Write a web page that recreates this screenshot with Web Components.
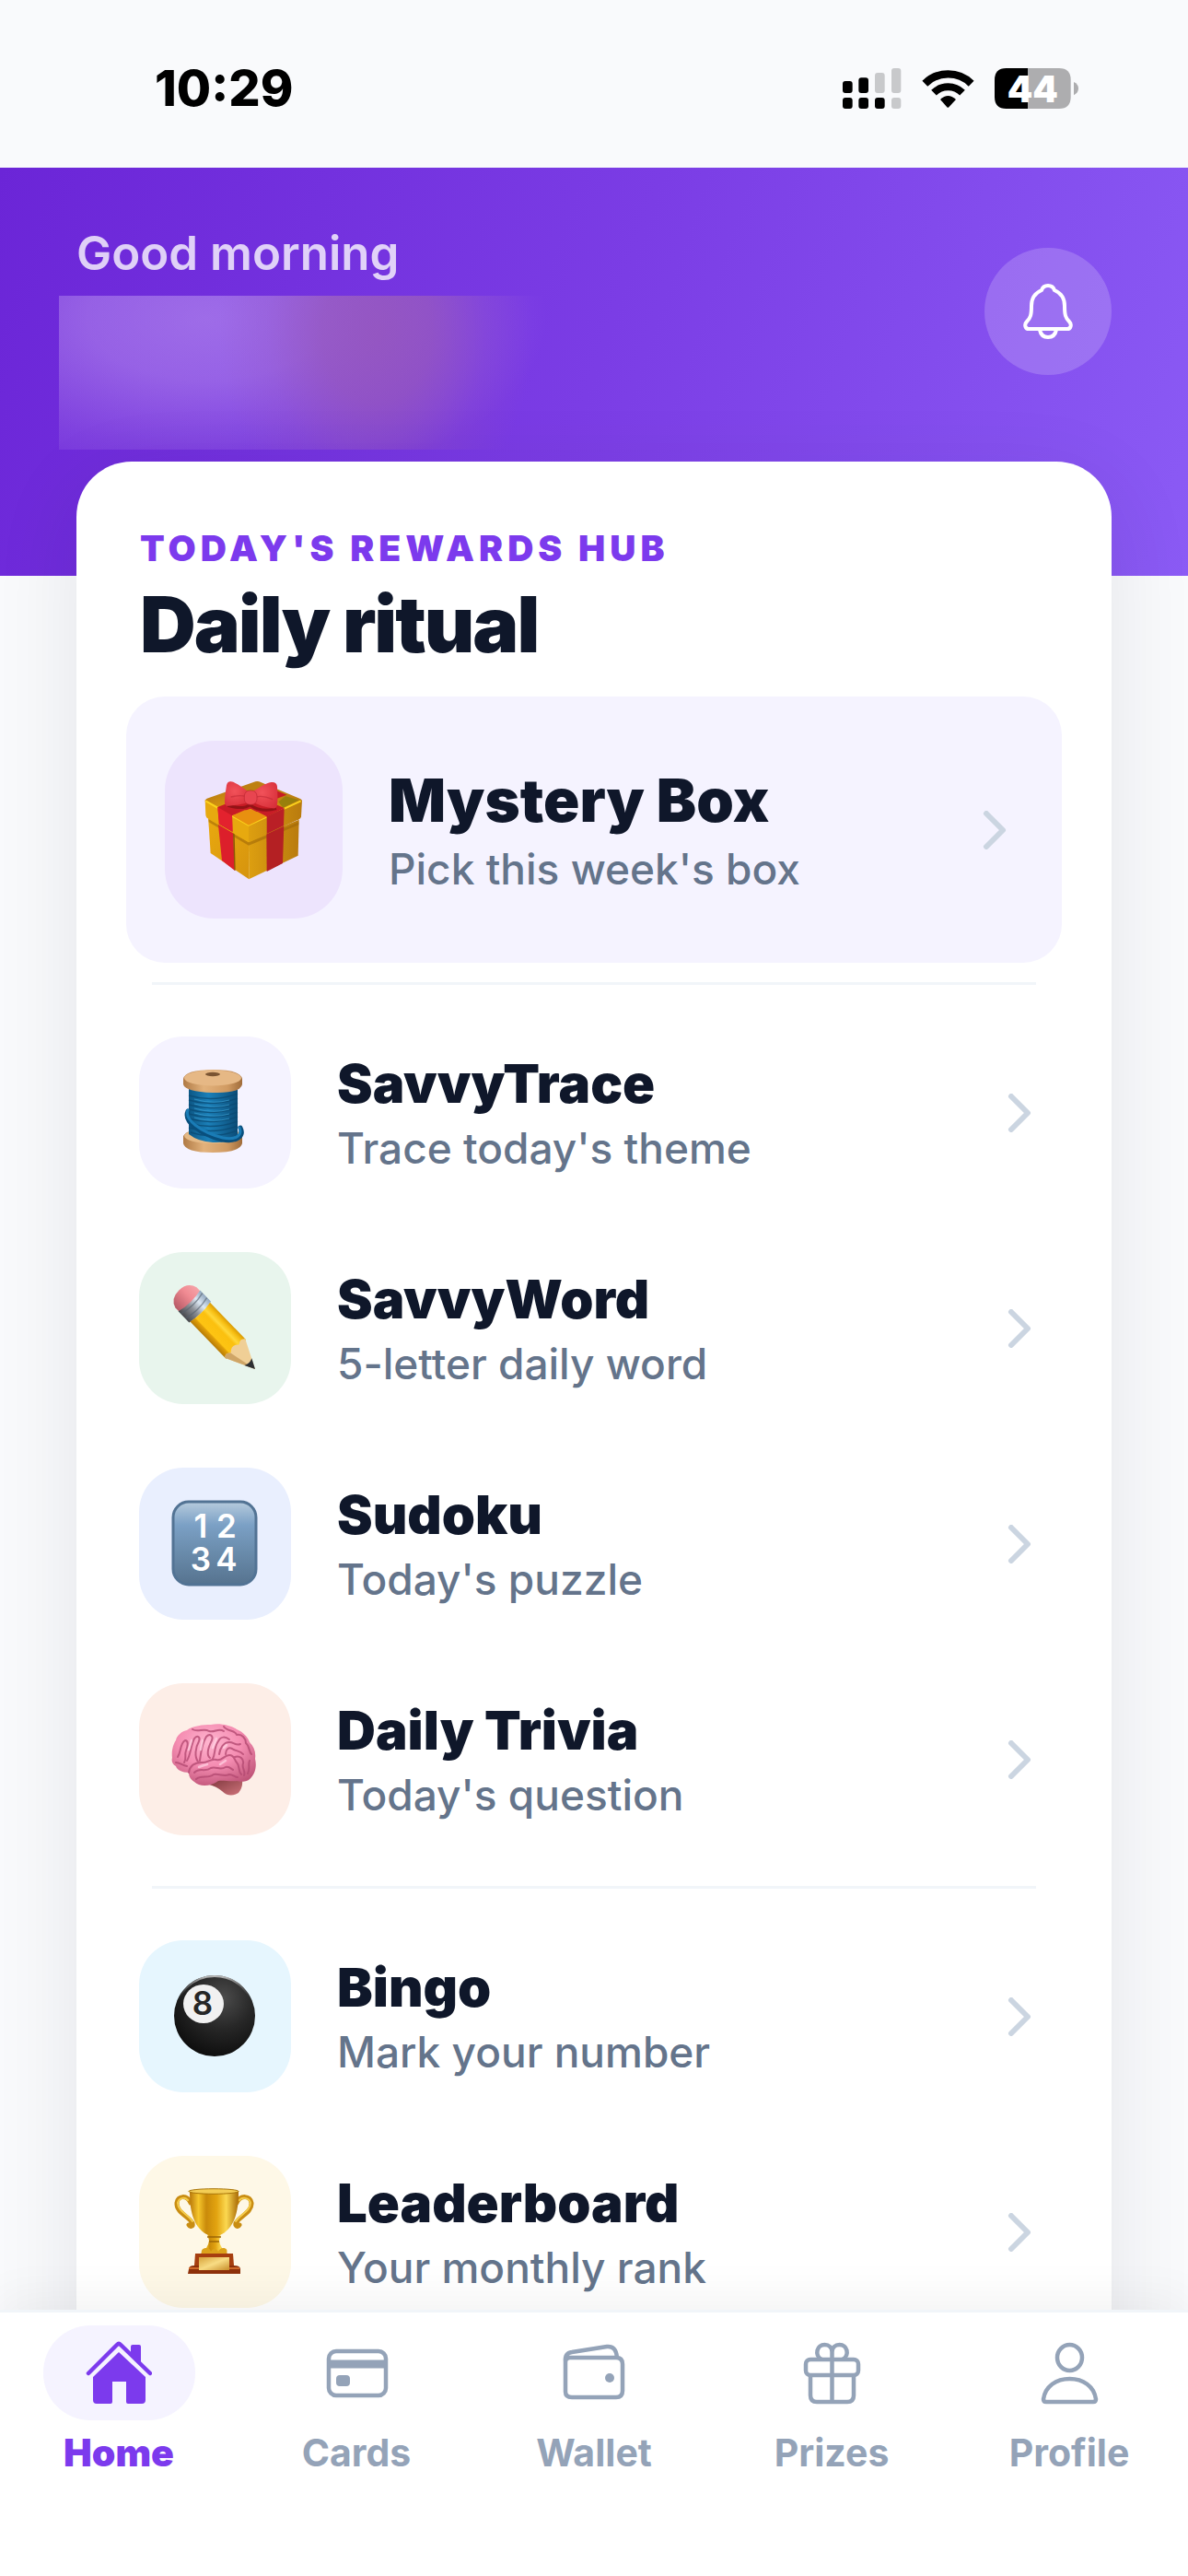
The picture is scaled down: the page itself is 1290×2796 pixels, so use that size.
<!DOCTYPE html>
<html lang="en">
<head>
<meta charset="utf-8">
<meta name="viewport" content="width=device-width, initial-scale=1">
<title>Daily ritual</title>
<style>
  html, body { margin: 0; height: 100%; }
  body {
    --violet: #7c3aed;
    --ink: #0f172a;
    --slate: #64748b;
    --mist: #94a3b8;
    --line: #f1f5f9;
    --lilac: #f5f3ff;
    background: #f9fafc;
    color: var(--ink);
    font-family: Inter, "Liberation Sans", sans-serif;
  }
</style>
</head>
<body>
<app-shell>
  <status-bar slot="status">10:29</status-bar>
  <hero-header>Good morning</hero-header>
  <rewards-card>
    <span slot="eyebrow">TODAY'S REWARDS HUB</span>
    <span slot="title">Daily ritual</span>

    <reward-row featured tone="#ede4fd">
      <svg slot="icon" width="108" height="108" viewBox="214 200 324 324" aria-hidden="true">
        <defs>
          <linearGradient id="gl" x1="0" y1="0" x2="1" y2="1"><stop offset="0" stop-color="#e9a90f"/><stop offset="1" stop-color="#d6940e"/></linearGradient>
          <linearGradient id="gr" x1="0" y1="0" x2="1" y2="0"><stop offset="0" stop-color="#dd9f10"/><stop offset="1" stop-color="#b97b0e"/></linearGradient>
          <radialGradient id="gt" cx=".42" cy=".8" r=".6"><stop offset="0" stop-color="#f58a16"/><stop offset=".5" stop-color="#d9960f"/><stop offset="1" stop-color="#bd8012"/></radialGradient>
          <radialGradient id="bow" cx=".4" cy=".4" r=".7"><stop offset="0" stop-color="#f2525a"/><stop offset="1" stop-color="#d8303a"/></radialGradient>
        </defs>
        <path d="M226 318 358 396 359 522 234 437Z" fill="url(#gl)"/>
        <path d="M358 396 522 328 519 445 359 522Z" fill="url(#gr)"/>
        <path d="M227 326 358 402 521 336 521 345 358 412 228 336Z" fill="#9a6508" opacity=".55"/>
        <path d="M258 335 307 365 313 494 271 461Z" fill="#dc1f2b"/>
        <path d="M307 366 312 372 315 494 311 492Z" fill="#8c5606"/>
        <path d="M416 370 473 345 469 470 417 497Z" fill="#b42023"/>
        <path d="M222 259 380 204Q386 202 392 204L526 260Q532 263 530 268L360 345 216 268Q216 262 222 259Z" fill="url(#gt)"/>
        <path d="M216 264 358 345 358 402 222 322Q218 318 218 312Z" fill="#e7a90f"/>
        <path d="M358 345 532 264 529 318Q528 324 522 327L358 402Z" fill="url(#gr)"/>
        <path d="M218 267 358 346 528 267" fill="none" stroke="#fbd21c" stroke-width="6" stroke-linejoin="round"/>
        <path d="M257 287 420 222 482 247 304 315 305 367 263 343Z" fill="#c71b25"/>
        <path d="M257 287 304 315 306 368 261 342Z" fill="#e3222e"/>
        <path d="M474 290 417 319 320 270 378 250Z" fill="#c81d26"/>
        <path d="M417 318 474 290 472 348 417 374Z" fill="#ba1f26"/>
        <path d="M304 315 345 297 388 303 417 318 358 346Z" fill="#e8900f"/>
        <path d="M455 270 478 252 522 264 470 289Z" fill="#8d7d0b" opacity=".8"/>
        <path d="M290 282Q340 296 362 280 400 306 448 292" fill="none" stroke="#7d1010" stroke-width="9" opacity=".7"/>
        <path d="M360 238C340 226 318 206 300 204Q289 203 286 216C283 238 279 258 280 274Q282 285 294 283C318 280 345 278 362 268Z" fill="url(#bow)"/>
        <path d="M368 238C390 226 412 208 432 206Q450 205 451 220C452 246 454 266 450 283Q447 293 436 291C414 288 388 280 368 268Z" fill="url(#bow)"/>
        <path d="M300 254Q335 246 350 254M436 262Q400 248 384 254" stroke="#bf2a35" stroke-width="4" fill="none" opacity=".6"/>
        <rect x="344" y="233" width="41" height="46" rx="18" fill="#e84550" stroke="#bd2732" stroke-width="2"/>
      </svg>
      <span slot="title">Mystery Box</span>
      <span slot="subtitle">Pick this week's box</span>
    </reward-row>

    <card-divider></card-divider>

    <reward-row tone="#f5f3ff">
      <svg slot="icon" width="165" height="165" viewBox="0 0 165 165" aria-hidden="true">
        <defs>
          <linearGradient id="wd" x1="0" x2="1"><stop offset="0" stop-color="#b07a45"/><stop offset=".35" stop-color="#e2b27c"/><stop offset=".75" stop-color="#d09a62"/><stop offset="1" stop-color="#a06c3a"/></linearGradient>
          <linearGradient id="th" x1="0" x2="1"><stop offset="0" stop-color="#0d5785"/><stop offset=".4" stop-color="#1b80b9"/><stop offset="1" stop-color="#0b4c77"/></linearGradient>
        </defs>
        <path d="M48 108Q52 100 80 100T112 108V116Q110 126 80 126T48 116Z" fill="url(#wd)"/>
        <ellipse cx="80" cy="108" rx="31" ry="8" fill="#e5b985"/>
        <path d="M54 55H107V108Q96 116 80 115T54 106Z" fill="url(#th)"/>
        <g fill="none" stroke="#0a4a73" stroke-width="1.4" opacity=".8">
          <path d="M54 64Q80 72 107 62M54 69Q80 77 107 67M54 74Q80 82 107 72M54 79Q80 87 107 77M54 84Q80 92 107 82M54 89Q80 97 107 87M54 94Q80 102 107 92M54 99Q80 107 107 97M56 104Q80 112 107 102"/>
        </g>
        <g fill="none" stroke="#3c9fd2" stroke-width="1.1" opacity=".65">
          <path d="M60 68Q80 74 98 69M60 73Q80 79 98 74M60 78Q80 84 98 79M60 83Q80 89 98 84M60 88Q80 94 98 89"/>
        </g>
        <path d="M53 81C48 92 66 106 90 112 108 115 114 107 110 99" fill="none" stroke="#094f7d" stroke-width="5" stroke-linecap="round"/>
        <path d="M53 80C49 90 67 104 91 110 107 113 112 106 109 99" fill="none" stroke="#1a7cb6" stroke-width="3" stroke-linecap="round"/>
        <path d="M48 46Q50 36 80 36T112 46V52Q110 62 80 61T48 52Z" fill="url(#wd)"/>
        <ellipse cx="80" cy="45" rx="31" ry="8.500" fill="#e6b885"/>
        <ellipse cx="80" cy="41" rx="8" ry="2.200" fill="#7a5432"/>
      </svg>
      <span slot="title">SavvyTrace</span>
      <span slot="subtitle">Trace today's theme</span>
    </reward-row>

    <reward-row tone="#e8f5ed">
      <svg slot="icon" width="165" height="165" viewBox="0 0 165 165" aria-hidden="true">
        <defs>
          <linearGradient id="er" x1="0" y1="0" x2="0" y2="1"><stop offset="0" stop-color="#f5a3a8"/><stop offset=".4" stop-color="#f08a92"/><stop offset="1" stop-color="#b65a66"/></linearGradient>
          <linearGradient id="fe" x1="0" y1="0" x2="0" y2="1"><stop offset="0" stop-color="#8fa5bd"/><stop offset=".3" stop-color="#dce8f3"/><stop offset=".6" stop-color="#8b8f96"/><stop offset="1" stop-color="#45474b"/></linearGradient>
          <linearGradient id="bd" x1="0" y1="0" x2="0" y2="1"><stop offset="0" stop-color="#d99b06"/><stop offset=".14" stop-color="#f6bd12"/><stop offset=".3" stop-color="#ffd83a"/><stop offset=".42" stop-color="#fbc00f"/><stop offset=".75" stop-color="#fdc413"/><stop offset=".8" stop-color="#e09f08"/><stop offset="1" stop-color="#b67b06"/></linearGradient>
        </defs>
        <g transform="translate(126 127) rotate(46)">
          <path d="M-98-16H-108Q-119-13-119 0T-108 16H-98Z" fill="url(#er)"/>
          <path d="M-103-16.500H-86Q-83 0-86 16.500H-103Q-99 0-103-16.500Z" fill="url(#fe)"/>
          <path d="M-99-16Q-95 0-99 16M-92-16Q-88 0-92 16" fill="none" stroke="#55606d" stroke-width="1.500" opacity=".6"/>
          <path d="M-86-15H-30L-26 0-30 15H-86Q-83 0-86-15Z" fill="url(#bd)"/>
          <path d="M-31-15 0 0-31 15Q-36 12-31 7-38 0-31-6-36-11-31-15Z" fill="#f0cf96"/>
          <path d="M-31 15 0 0-31 7Q-36 12-31 15Z" fill="#cfa566"/>
          <path d="M-11-5.500 0 0-11 5.500Q-8 0-11-5.500Z" fill="#2d2f33"/>
        </g>
      </svg>
      <span slot="title">SavvyWord</span>
      <span slot="subtitle">5-letter daily word</span>
    </reward-row>

    <reward-row tone="#e9effe">
      <svg slot="icon" width="165" height="165" viewBox="0 0 165 165" aria-hidden="true">
        <defs>
          <linearGradient id="sq" x1="0" y1="0" x2="0" y2="1"><stop offset="0" stop-color="#b6cbdd"/><stop offset=".28" stop-color="#7ba0c5"/><stop offset=".6" stop-color="#6a8cac"/><stop offset="1" stop-color="#56738f"/></linearGradient>
        </defs>
        <rect x="37" y="37" width="90" height="90" rx="17" fill="url(#sq)" stroke="#527394" stroke-width="3"/>
        <g fill="#fff" font-family="Inter, sans-serif" font-size="35" font-weight="600" text-anchor="middle">
          <text x="67" y="76">1</text><text x="95" y="76">2</text>
          <text x="67" y="112">3</text><text x="95" y="112">4</text>
        </g>
      </svg>
      <span slot="title">Sudoku</span>
      <span slot="subtitle">Today's puzzle</span>
    </reward-row>

    <reward-row tone="#fdeee7">
      <svg slot="icon" width="165" height="165" viewBox="0 0 165 165" aria-hidden="true">
        <defs>
          <radialGradient id="br" cx=".45" cy=".3" r=".75"><stop offset="0" stop-color="#ffb6d0"/><stop offset=".5" stop-color="#f58db2"/><stop offset="1" stop-color="#bf5478"/></radialGradient>
          <linearGradient id="stem" x1="0" y1="0" x2="1" y2="1"><stop offset="0" stop-color="#7c363c"/><stop offset="1" stop-color="#d0747c"/></linearGradient>
        </defs>
        <path d="M76 108Q92 102 112 105 113 113 108 119 98 125 90 117 84 112 76 110Z" fill="url(#stem)"/>
        <path d="M36 81C35 74 37 66 40 62 41 56 47 52 52 51 58 46 70 45 78 45 88 43 100 46 106 50 113 53 118 58 120 64 125 69 127 75 126 82 128 90 126 98 122 102 118 108 110 107 106 106 98 107 92 105 86 106 78 112 66 113 60 107 55 104 54 100 54 97 47 97 41 94 40 90 36 88 35 84 36 81Z" fill="url(#br)"/>
        <g fill="none" stroke="#b44a72" stroke-width="2" stroke-linecap="round" stroke-linejoin="round" opacity=".8">
          <path d="M54 97C55 90 60 86 68 86 74 87 78 81 84 83 90 85 92 78 98 78 104 78 103 83 106 86 110 90 107 95 111 99"/>
          <path d="M42 80C46 74 44 66 50 62 54 62 53 68 51 73 49 78 52 81 49 86"/>
          <path d="M52 84C56 78 56 68 60 60 63 56 67 58 65 63 61 70 60 80 64 85"/>
          <path d="M66 84C67 76 68 66 73 58 77 54 81 57 79 62 75 70 73 78 77 81"/>
          <path d="M80 82C83 77 81 70 86 63 89 57 94 58 98 61"/>
          <path d="M87 77C88 70 92 64 98 64 103 64 105 68 110 66"/>
          <path d="M94 77C94 72 97 69 101 71 105 74 110 73 113 77"/>
          <path d="M58 50C64 54 70 48 76 52 82 54 86 48 92 52M92 47C96 53 104 50 106 56 112 55 116 60 116 65 120 68 119 74 122 77"/>
          <path d="M60 97C66 91 72 97 78 92 84 90 88 95 94 91 98 90 100 93 102 94M62 104C68 99 75 104 81 99 88 98 92 102 98 99 102 99 104 102 107 102"/>
          <path d="M104 80C109 78 114 82 113 87 111 92 116 95 114 100M120 84C118 89 121 93 118 98M40 86C44 86 47 89 52 90"/>
        </g>
        <g fill="none" stroke="#ffd4e4" stroke-width="2.500" stroke-linecap="round" opacity=".7">
          <path d="M57 62 54 72M69 62 67 72M84 60 80 70M95 67 92 70M65 91Q70 89 74 88M88 88 94 84"/>
        </g>
      </svg>
      <span slot="title">Daily Trivia</span>
      <span slot="subtitle">Today's question</span>
    </reward-row>

    <card-divider></card-divider>

    <reward-row tone="#e6f6fe">
      <svg slot="icon" width="165" height="165" viewBox="0 0 165 165" aria-hidden="true">
        <defs>
          <radialGradient id="bl" cx=".6" cy=".28" r=".75"><stop offset="0" stop-color="#4c4c4c"/><stop offset=".5" stop-color="#272727"/><stop offset="1" stop-color="#0d0d0d"/></radialGradient>
          <linearGradient id="bh" x1="0" y1="0" x2="0" y2="1"><stop offset="0" stop-color="#b8b8b8"/><stop offset=".3" stop-color="#444" stop-opacity="0"/></linearGradient>
        </defs>
        <circle cx="82" cy="82" r="44" fill="url(#bl)"/>
        <circle cx="82" cy="82" r="43" fill="none" stroke="url(#bh)" stroke-width="2"/>
        <ellipse cx="70" cy="69" rx="22" ry="21" fill="#f1f1f1"/>
        <text x="69" y="81" fill="#262626" font-family="Inter, sans-serif" font-size="35" font-weight="600" text-anchor="middle">8</text>
      </svg>
      <span slot="title">Bingo</span>
      <span slot="subtitle">Mark your number</span>
    </reward-row>

    <reward-row tone="#fef8e7">
      <svg slot="icon" width="165" height="165" viewBox="0 0 165 165" aria-hidden="true">
        <defs>
          <linearGradient id="cup" x1="0" x2="1"><stop offset="0" stop-color="#b9780a"/><stop offset=".18" stop-color="#f6c62c"/><stop offset=".34" stop-color="#c98a0a"/><stop offset=".55" stop-color="#e2a310"/><stop offset=".75" stop-color="#fbd850"/><stop offset="1" stop-color="#a96a06"/></linearGradient>
          <linearGradient id="pl" x1="0" x2="1" y2="1"><stop offset="0" stop-color="#d6a23a"/><stop offset=".5" stop-color="#f8dc84"/><stop offset="1" stop-color="#c98f2a"/></linearGradient>
        </defs>
        <g fill="none" stroke="#c98d12" stroke-width="5" stroke-linecap="round">
          <path d="M56 51C52 42 42 43 41 51 40 61 54 66 58 73 59 77 55 77 54 75"/>
          <path d="M106 51C110 42 121 43 122 51 123 61 109 66 105 73 104 77 108 77 109 75"/>
        </g>
        <g fill="none" stroke="#f4cc4c" stroke-width="2" stroke-linecap="round">
          <path d="M53 48C49 44 43 46 42 51 42 60 54 64 58 71"/>
          <path d="M109 48C113 44 120 46 121 51 121 60 109 64 105 71"/>
        </g>
        <path d="M74 84H89L87 92Q88 100 96 106H67Q75 100 76 92Z" fill="url(#cup)"/>
        <path d="M55 38H108C108 58 105 76 90 85Q82 89 73 85C58 76 55 58 55 38Z" fill="url(#cup)"/>
        <ellipse cx="81" cy="38.500" rx="27" ry="2.800" fill="#f3cd55" stroke="#a87409" stroke-width="1"/>
        <path d="M74 88H89M76 93H87" stroke="#9c6506" stroke-width="1.500"/>
        <path d="M68 106C66 99 77 98 78 104 80 100 84 100 86 104 88 98 98 99 95 106Z" fill="#dca21b"/>
        <path d="M61 106H102L103 119H60Z" fill="#a63f10"/>
        <path d="M54 123Q54 119 60 119H103Q110 119 110 123V128H53Z" fill="#8e310b"/>
        <path d="M54 122H109" stroke="#cf6a2a" stroke-width="2"/>
        <rect x="65" y="110" width="33" height="14" fill="url(#pl)"/>
      </svg>
      <span slot="title">Leaderboard</span>
      <span slot="subtitle">Your monthly rank</span>
    </reward-row>
  </rewards-card>

  <tab-bar slot="tabs">
    <tab-item active>
      <svg slot="icon" width="72" height="72" viewBox="0 0 72 72" fill="currentColor" aria-hidden="true">
        <path d="M3 36 34 5Q36 3 38 5L70 36" fill="none" stroke="currentColor" stroke-width="4.500" stroke-linecap="round" stroke-linejoin="round"/>
        <path d="M49 13V7Q49 5 51 5H58Q60 5 60 7V25L49 14Z"/>
        <path d="M36 13 65 40V65Q65 69 61 69H46Q44 69 44 67V45H29V67Q29 69 27 69H12Q8 69 8 65V40Z"/>
      </svg>
      Home
    </tab-item>
    <tab-item>
      <svg slot="icon" width="72" height="72" viewBox="0 0 72 72" fill="none" stroke="currentColor" stroke-width="4.500" aria-hidden="true">
        <rect x="6" y="12" width="62" height="48" rx="8"/>
        <path d="M6 26H68" stroke-width="9"/>
        <rect x="14" y="38" width="15" height="12" rx="4" fill="currentColor" stroke="none"/>
      </svg>
      Cards
    </tab-item>
    <tab-item>
      <svg slot="icon" width="72" height="72" viewBox="0 0 72 72" fill="none" stroke="currentColor" stroke-width="4.500" stroke-linejoin="round" aria-hidden="true">
        <path d="M5 24V56Q5 62 12 62H60Q67 62 67 55V26Q67 19 60 19H10Q5 19 5 24Q4 14 12 13L50 7Q60 6 61 19"/>
        <circle cx="53" cy="41" r="5" fill="currentColor" stroke="none"/>
      </svg>
      Wallet
    </tab-item>
    <tab-item>
      <svg slot="icon" width="72" height="72" viewBox="0 0 72 72" fill="none" stroke="currentColor" stroke-width="4.500" aria-hidden="true">
        <rect x="8" y="21" width="57" height="17" rx="5"/>
        <path d="M13 38V60Q13 67 20 67H53Q60 67 60 60V38M36.500 67V13M36.500 13C36.500 8 33 5 28.500 5 20 5 17 16 25 21M36.500 13C36.500 8 40 5 44.500 5 53 5 56 16 48 21"/>
      </svg>
      Prizes
    </tab-item>
    <tab-item>
      <svg slot="icon" width="72" height="72" viewBox="0 0 72 72" fill="none" stroke="currentColor" stroke-width="4.500" stroke-linejoin="round" aria-hidden="true">
        <ellipse cx="36.500" cy="19" rx="13.500" ry="14"/>
        <path d="M8 64C10 50 22 42 36.500 42S63 50 65 64Q65 67 62 67H11Q8 67 8 64Z"/>
      </svg>
      Profile
    </tab-item>
  </tab-bar>
</app-shell>

<script>
  const define = (name, html) => {
    const template = document.createElement('template');
    template.innerHTML = html;
    customElements.define(name, class extends HTMLElement {
      constructor() {
        super();
        this.attachShadow({ mode: 'open' }).append(template.content.cloneNode(true));
      }
      connectedCallback() {
        const tone = this.getAttribute('tone');
        if (tone) this.style.setProperty('--tone', tone);
      }
    });
  };

  define('app-shell', `
    <style>
      :host { display: flex; flex-direction: column; height: 100vh; overflow: hidden; }
      main { flex: 1; min-height: 0; overflow-y: auto; scrollbar-width: none; }
    </style>
    <slot name="status"></slot>
    <main><slot></slot></main>
    <slot name="tabs"></slot>
  `);

  define('status-bar', `
    <style>
      :host { display: flex; flex: none; align-items: center; justify-content: space-between;
        box-sizing: border-box; height: 182px; padding: 10px 119px 0 168px; color: #000; }
      time { font-size: 54px; font-weight: 800; line-height: 64px; }
      div { display: flex; align-items: center; gap: 22px; }
      svg { display: block; overflow: visible; }
    </style>
    <time><slot></slot></time>
    <div>
      <svg width="64" height="44" viewBox="0 0 192 132" role="img" aria-label="Signal">
        <rect x="0" y="42" width="32" height="39" rx="9"/><rect x="52" y="31" width="32" height="50" rx="9"/>
        <rect x="0" y="96" width="32" height="36" rx="9"/><rect x="52" y="96" width="32" height="36" rx="9"/><rect x="105" y="96" width="32" height="36" rx="9"/>
        <g fill="#c8c9cb"><rect x="105" y="15" width="32" height="66" rx="9"/><rect x="159" y="0" width="31" height="81" rx="9"/><rect x="159" y="96" width="31" height="36" rx="9"/></g>
      </svg>
      <svg width="57" height="44" viewBox="0 0 171 132" role="img" aria-label="Wi-Fi">
        <path d="M10 50A108 108 0 0 1 161 50" fill="none" stroke="#000" stroke-width="25"/>
        <path d="M39 80A66 66 0 0 1 132 80" fill="none" stroke="#000" stroke-width="24"/>
        <path d="M60 102Q85 78 111 102L88 127Q85 130 82 127Z"/>
      </svg>
      <svg width="91" height="44" viewBox="0 0 273 132" role="img" aria-label="Battery">
        <path d="M108 0H210Q248 0 248 38V94Q248 132 210 132H108Z" fill="#adadaf"/>
        <path d="M108 0H38Q0 0 0 38V94Q0 132 38 132H108Z"/>
        <path d="M258 45Q273 52 273 66T258 88Z" fill="#adadaf"/>
        <text x="124" y="110" fill="#fff" font-family="Inter, sans-serif" font-size="118" font-weight="900" text-anchor="middle">44</text>
      </svg>
    </div>
  `);

  define('hero-header', `
    <style>
      :host { display: flex; align-items: flex-start; justify-content: space-between;
        padding: 63px 83px 137px; background: linear-gradient(109deg, #6b25d7, #7b3de5 50%, #8b5bf5); }
      .greeting { flex: 1; }
      p { margin: 0 0 16px; color: rgba(255, 255, 255, .78); font-size: 51px; font-weight: 600; line-height: 60px; }
      .name { height: 167px; max-width: 640px; margin-left: -19px;
        background:
          radial-gradient(ellipse 170px 220px at 345px 40px, rgba(150, 86, 184, .78), rgba(150, 86, 184, .66) 35%, rgba(150, 86, 184, .2) 70%, rgba(150, 86, 184, 0)),
          radial-gradient(ellipse 370px 190px at 160px 25px, rgba(190, 152, 240, .56), rgba(190, 152, 240, .46) 35%, rgba(190, 152, 240, .14) 75%, rgba(190, 152, 240, 0)),
          linear-gradient(90deg, rgba(190, 152, 240, .08), rgba(190, 152, 240, 0) 70%); }
      button { display: grid; place-items: center; width: 138px; height: 138px; margin: 24px 0 0; padding: 0;
        border: 0; border-radius: 50%; background: rgba(255, 255, 255, .18); color: #fff; }
    </style>
    <div class="greeting">
      <p><slot></slot></p>
      <div class="name"></div>
    </div>
    <button type="button" aria-label="Notifications">
      <svg width="54" height="60" viewBox="0 0 54 60" fill="none" stroke="currentColor" stroke-width="4" stroke-linecap="round" stroke-linejoin="round">
        <path d="M27 2C23 2 21 4 20 7 13 10 9 16 9 24 9 34 8 37 4 41 2 43 2 45 2.500 46.500 3 48 4 49 6 49H48C50 49 51 48 51.500 46.500 52 45 52 43 50 41 46 37 45 34 45 24 45 16 41 10 34 7 33 4 31 2 27 2Z"/>
        <path d="M18 50C19 55 22 58 27 58S35 55 36 50"/>
      </svg>
    </button>
  `);

  define('rewards-card', `
    <style>
      :host { display: block; position: relative; margin: -124px 83px 0; padding: 68px 54px 60px;
        border-radius: 60px; background: #fff; box-shadow: 0 24px 96px rgba(15, 23, 42, .09); }
      header { padding: 0 15px 30px; }
      p, h1 { margin: 0; }
      p { color: var(--violet); font-size: 39px; font-weight: 900; line-height: 52px; letter-spacing: 5px; }
      h1 { margin-top: 9px; font-size: 84px; font-weight: 900; line-height: 96px; letter-spacing: -2px; }
    </style>
    <header>
      <p><slot name="eyebrow"></slot></p>
      <h1><slot name="title"></slot></h1>
    </header>
    <slot></slot>
  `);

  define('card-divider', `
    <style>
      :host { display: block; height: 3px; margin: 21px 28px; background: var(--line); }
    </style>
  `);

  define('reward-row', `
    <style>
      :host { display: block; }
      a { display: flex; align-items: center; padding: 35px 33px 34px 14px; gap: 50px;
        color: inherit; text-decoration: none; }
      .tile { display: grid; flex: none; place-items: center; width: 165px; height: 165px;
        border-radius: 48px; background: var(--tone); }
      .text { display: flex; flex: 1; flex-direction: column; }
      .title { font-size: 58px; font-weight: 900; line-height: 76px; }
      .subtitle { color: var(--slate); font-size: 46px; font-weight: 500; line-height: 64px; }
      svg { flex: none; display: block; }
      :host([featured]) a { padding: 48px 60px 48px 42px; border-radius: 42px; background: var(--lilac); }
      :host([featured]) .tile { width: 193px; height: 193px; border-radius: 54px; }
      :host([featured]) .title { font-size: 65px; line-height: 84px; }
    </style>
    <a href="#">
      <span class="tile"><slot name="icon"></slot></span>
      <span class="text">
        <span class="title"><slot name="title"></slot></span>
        <span class="subtitle"><slot name="subtitle"></slot></span>
      </span>
      <svg width="26" height="42" viewBox="0 0 26 42" fill="none" stroke="#cbd5e1" stroke-width="6" stroke-linecap="round" stroke-linejoin="round"><path d="M4 3 22 21 4 39"/></svg>
    </a>
  `);

  define('tab-bar', `
    <style>
      :host { display: block; position: relative; z-index: 1; flex: none; box-sizing: border-box; min-height: 289px;
        border-top: 3px solid var(--line); background: #fff; box-shadow: 0 -12px 48px rgba(0, 0, 0, .05); }
      nav { display: flex; padding: 14px 0 100px; }
    </style>
    <nav><slot></slot></nav>
  `);

  define('tab-item', `
    <style>
      :host { flex: 1; min-width: 0; }
      a { display: flex; flex-direction: column; align-items: center; gap: 11px; color: var(--mist);
        font-size: 41px; font-weight: 700; line-height: 48px; text-decoration: none; }
      .pill { display: grid; place-items: center; width: 165px; height: 103px; border-radius: 51px; }
      :host([active]) a { color: var(--violet); font-weight: 900; }
      :host([active]) .pill { background: var(--lilac); }
    </style>
    <a href="#">
      <span class="pill"><slot name="icon"></slot></span>
      <span><slot></slot></span>
    </a>
  `);
</script>
</body>
</html>
